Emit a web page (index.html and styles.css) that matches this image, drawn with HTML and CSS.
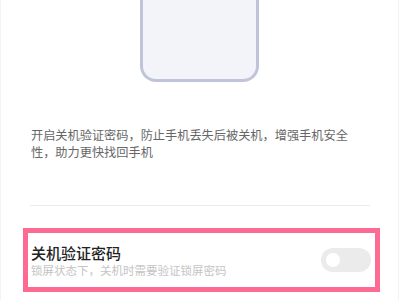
FILE: index.html
```html
<!DOCTYPE html>
<html lang="zh-CN">

<head>
    <meta charset="UTF-8">
    <meta name="viewport" content="width=device-width, initial-scale=1.0">
    <title>关机验证密码</title>
    <link rel="stylesheet" href="styles.css">
</head>

<body>
    <div class="page">
        <div class="phone"></div>
        <p class="desc">开启关机验证密码，防止手机丢失后被关机，增强手机安全性，助力更快找回手机</p>
        <div class="line"></div>
        <div class="setting">
            <div class="setting_text">
                <div class="title">关机验证密码</div>
                <div class="sub">锁屏状态下，关机时需要验证锁屏密码</div>
            </div>
            <div class="switch"><span class="knob"></span></div>
        </div>
    </div>
</body>

</html>
```

FILE: styles.css
```css
* {
    margin: 0;
    padding: 0;
    box-sizing: border-box;
}

body {
    background-color: #fff;
    font-family: "Noto Sans CJK SC", "Noto Sans", sans-serif;
}

.page {
    width: 399px;
    height: 300px;
    overflow: hidden;
    border-left: 1px solid #f3f3f3;
    border-right: 1px solid #f3f3f3;
}

.phone {
    width: 119px;
    height: 82px;
    margin-left: 139px;
    background-color: #f3f4f9;
    border: 3px solid #c0c4d8;
    border-top: none;
    border-radius: 0 0 16px 16px;
}

.desc {
    width: 322px;
    margin: 45px 0 0 30px;
    font-size: 12.2px;
    line-height: 17px;
    color: #666;
}

.line {
    height: 1px;
    margin: 44px 28px 0 29px;
    background-color: #ebebeb;
}

.setting {
    display: flex;
    align-items: center;
    justify-content: space-between;
    width: 357px;
    height: 64px;
    margin: 22px 0 0 22px;
    padding: 0 4px 0 3px;
    border: 5px solid #fd6b93;
}

.setting_text {
    padding-top: 1px;
}

.title {
    font-size: 15px;
    line-height: 18px;
    font-weight: 500;
    color: #222;
}

.sub {
    margin-top: 1px;
    font-size: 11.5px;
    line-height: 14px;
    color: #c4c4c4;
}

.switch {
    position: relative;
    width: 50px;
    height: 24px;
    border-radius: 12px;
    background-color: #ebebeb;
}

.knob {
    position: absolute;
    left: 5px;
    top: 5px;
    width: 14px;
    height: 14px;
    border-radius: 50%;
    background-color: #fff;
}
```
